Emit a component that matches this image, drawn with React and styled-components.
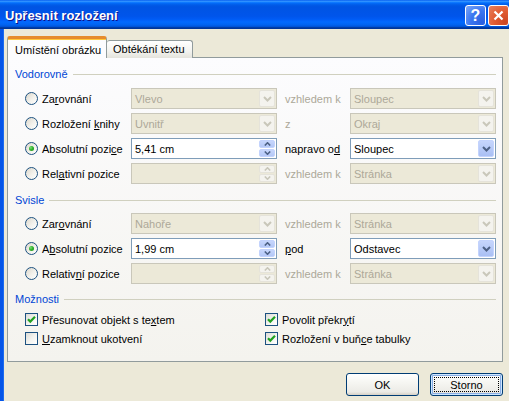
import React from 'react';
import styled, { createGlobalStyle, css } from 'styled-components';

const Global = createGlobalStyle`
  html, body { margin: 0; padding: 0; background: #ECE9D8; overflow: hidden; }
  #root { width: 509px; height: 401px; overflow: hidden; }
`;

const Window = styled.div`
  width: 514px;
  height: 401px;
  display: flex;
  flex-direction: column;
  font-family: "Liberation Sans", Arial, sans-serif;
  font-size: 11px;
  color: #000;
`;

const TitleBar = styled.div`
  flex: none;
  height: 29px;
  display: flex;
  align-items: center;
  padding: 0 5px 0 5px;
  background: linear-gradient(to bottom,
    #0058EE 0%, #3593FF 4%, #288EFF 6%, #127DFF 8%, #036FFC 10%,
    #0262EE 14%, #0057E5 20%, #0054E3 24%, #0055EB 56%, #005BF5 66%,
    #026AFE 76%, #0062EF 86%, #0052D6 92%, #0040AB 94%, #003092 100%);
`;

const Title = styled.div`
  flex: 1;
  color: #fff;
  font-weight: bold;
  font-size: 13px;
  text-shadow: 1px 1px #0F1089;
  padding-top: 1px;
`;

const TitleButtons = styled.div`
  display: flex;
  gap: 2px;
  align-self: flex-start;
  margin-top: 5px;
`;

const CaptionButton = styled.div`
  width: 21px;
  height: 21px;
  box-sizing: border-box;
  border: 1px solid #fff;
  border-radius: 3px;
  display: flex;
  align-items: center;
  justify-content: center;
  color: #fff;
  font-weight: bold;
  font-size: 16px;
  ${p => p.$close ? css`
    background: radial-gradient(circle at 85% 85%, #CC4622 0%, #E0592F 45%, #E8825F 100%);
  ` : css`
    background: radial-gradient(circle at 85% 85%, #2A5FE0 0%, #3A76F0 50%, #7FA8F8 100%);
  `}
`;

const Body = styled.div`
  flex: 1;
  display: flex;
  flex-direction: column;
  background: #ECE9D8;
  border-left: 3px solid #0555E8;
  box-shadow: inset 1px 0 0 #1C6BF0;
  padding: 7px 0 0 4px;
`;

const Tabs = styled.div`
  display: flex;
  align-items: flex-end;
  height: 22px;
  margin-bottom: -1px;
  position: relative;
  z-index: 1;
`;

const Tab = styled.div`
  box-sizing: border-box;
  border: 1px solid #919B9C;
  border-bottom: none;
  border-radius: 3px 3px 0 0;
  display: flex;
  align-items: center;
  ${p => p.$active ? css`
    width: 100px;
    height: 22px;
    padding: 2px 0 0 7px;
    background: #FCFCFE;
    border-top: 3px solid #E68B2C;
    box-shadow: inset 0 1px 0 #FFC73C;
  ` : css`
    width: 86px;
    height: 18px;
    padding: 0 0 1px 6px;
    background: linear-gradient(to bottom, #FFFFFF, #F3F3EF 60%, #E4E3DC);
    border-left: none;
  `}
`;

const Panel = styled.div`
  box-sizing: border-box;
  width: 496px;
  height: 305px;
  border: 1px solid #919B9C;
  background: linear-gradient(to bottom, #FCFCFE, #F4F3EE);
  padding: 9px 6px 0 7px;
  display: flex;
  flex-direction: column;
`;

const Header = styled.div`
  display: flex;
  align-items: center;
  height: 14px;
  color: #0046D5;
  margin-top: ${p => p.$mt || 0}px;
  &::after {
    content: '';
    flex: 1;
    height: 1px;
    background: #D0D0BF;
    margin-left: 5px;
  }
`;

const RowGrid = styled.div`
  display: grid;
  grid-template-columns: 106px 146px 73px 146px;
  grid-auto-rows: 21px;
  row-gap: 4px;
  padding-left: 10px;
  margin-top: ${p => p.$mt}px;
`;

const OptionLabel = styled.label`
  display: flex;
  align-items: center;
  gap: 4px;
  white-space: nowrap;
`;

const RadioCircle = styled.span`
  box-sizing: border-box;
  width: 13px;
  height: 13px;
  border-radius: 50%;
  border: 1px solid #1C5180;
  background: linear-gradient(135deg, #DCD7CB 0%, #F2F1EC 55%, #FFFFFF 100%);
  display: flex;
  align-items: center;
  justify-content: center;
  flex: none;
  ${p => p.$checked && css`
    &::after {
      content: '';
      width: 5px;
      height: 5px;
      border-radius: 50%;
      background: radial-gradient(circle at 35% 35%, #7FE07A 0%, #2DB22A 45%, #1A8A1A 100%);
    }
  `}
`;

const CheckBox = styled.span`
  box-sizing: border-box;
  width: 13px;
  height: 13px;
  border: 1px solid #1C5180;
  background: linear-gradient(135deg, #DCDCD7 0%, #F4F4F0 55%, #FFFFFF 100%);
  display: flex;
  align-items: center;
  justify-content: center;
  flex: none;
`;

const U = styled.span`
  text-decoration: underline;
`;

const SideLabel = styled.div`
  display: flex;
  align-items: center;
  padding-left: 8px;
  color: ${p => p.$disabled ? '#ACA899' : '#000'};
`;

const Field = styled.div`
  box-sizing: border-box;
  height: 21px;
  display: flex;
  align-items: center;
  padding: 1px;
  border: 1px solid ${p => p.$disabled ? '#C9C7BA' : '#7F9DB9'};
  background: ${p => p.$disabled ? '#ECE9D8' : '#FFFFFF'};
  color: ${p => p.$disabled ? '#ACA899' : '#000'};
`;

const FieldText = styled.span`
  flex: 1;
  padding-left: 2px;
  white-space: nowrap;
`;

const DropButton = styled.span`
  box-sizing: border-box;
  width: 16px;
  height: 17px;
  border-radius: 2px;
  display: flex;
  align-items: center;
  justify-content: center;
  ${p => p.$disabled ? css`
    background: #F4F3EE;
    border: 1px solid #E5E3DA;
  ` : css`
    background: linear-gradient(to bottom, #C6D6FC 0%, #B8CBF8 50%, #A9BFF4 100%);
    border: 1px solid #C3D3FD;
  `}
`;

const SpinButtons = styled.span`
  width: 16px;
  height: 17px;
  display: flex;
  flex-direction: column;
  gap: 1px;
`;

const SpinHalf = styled.span`
  box-sizing: border-box;
  flex: 1;
  border-radius: 2px;
  display: flex;
  align-items: center;
  justify-content: center;
  ${p => p.$disabled ? css`
    background: #F4F3EE;
    border: 1px solid #E5E3DA;
  ` : css`
    background: linear-gradient(to bottom, #C6D6FC 0%, #B4C8F7 100%);
    border: 1px solid #C3D3FD;
  `}
`;

const CheckGrid = styled.div`
  display: grid;
  grid-template-columns: 240px 1fr;
  grid-auto-rows: 19px;
  padding-left: 10px;
  margin-top: 4px;
`;

const Footer = styled.div`
  width: 496px;
  display: flex;
  justify-content: flex-end;
  gap: 11px;
  margin-top: 11px;
`;

const Button = styled.div`
  box-sizing: border-box;
  width: 73px;
  height: 23px;
  border: 1px solid #003C74;
  border-radius: 3px;
  background: linear-gradient(to bottom, #FFFFFF 0%, #F6F6F2 40%, #ECEBE6 85%, #D6D0C5 100%);
  display: flex;
  align-items: center;
  justify-content: center;
  position: relative;
  ${p => p.$default && css`
    box-shadow: inset 0 0 0 1px #CEE7FF, inset 0 0 0 2px #89ADE4;
    &::after {
      content: '';
      position: absolute;
      inset: 3px;
      border: 1px dotted #000;
    }
  `}
`;

const Chevron = ({ color, disabled }) => (
  <svg width="9" height="6" viewBox="0 0 9 6">
    <polyline points="1,1 4.5,4.5 8,1" fill="none" stroke={disabled ? '#C9C7BA' : (color || '#4D6185')} strokeWidth="2" />
  </svg>
);

const SmallArrow = ({ up, disabled }) => (
  <svg width="7" height="4" viewBox="0 0 7 4">
    <polyline points={up ? '0.8,3.5 3.5,0.8 6.2,3.5' : '0.8,0.5 3.5,3.2 6.2,0.5'} fill="none" stroke={disabled ? '#C9C7BA' : '#4D6185'} strokeWidth="1.6" />
  </svg>
);

const Combo = ({ value, disabled }) => (
  <Field $disabled={disabled}>
    <FieldText>{value}</FieldText>
    <DropButton $disabled={disabled}><Chevron disabled={disabled} /></DropButton>
  </Field>
);

const Spin = ({ value, disabled }) => (
  <Field $disabled={disabled}>
    <FieldText>{value}</FieldText>
    <SpinButtons>
      <SpinHalf $disabled={disabled}><SmallArrow up disabled={disabled} /></SpinHalf>
      <SpinHalf $disabled={disabled}><SmallArrow disabled={disabled} /></SpinHalf>
    </SpinButtons>
  </Field>
);

const Radio = ({ checked, children }) => (
  <OptionLabel>
    <RadioCircle $checked={checked} />
    <span>{children}</span>
  </OptionLabel>
);

const Check = ({ checked, children }) => (
  <OptionLabel>
    <CheckBox>
      {checked && (
        <svg width="9" height="9" viewBox="0 0 9 9">
          <polyline points="1,4.2 3.3,6.6 8,1.8" fill="none" stroke="#21A121" strokeWidth="2.2" />
        </svg>
      )}
    </CheckBox>
    <span>{children}</span>
  </OptionLabel>
);

export default function App() {
  return (
    <>
      <Global />
      <Window>
        <TitleBar>
          <Title>Upřesnit rozložení</Title>
          <TitleButtons>
            <CaptionButton>?</CaptionButton>
            <CaptionButton $close>
              <svg width="11" height="11" viewBox="0 0 11 11">
                <path d="M1.5 1.5 L9.5 9.5 M9.5 1.5 L1.5 9.5" stroke="#fff" strokeWidth="2.2" />
              </svg>
            </CaptionButton>
          </TitleButtons>
        </TitleBar>
        <Body>
          <Tabs>
            <Tab $active>Umístění obrázku</Tab>
            <Tab>Obtékání textu</Tab>
          </Tabs>
          <Panel>
            <Header>Vodorovně</Header>
            <RowGrid $mt={7}>
              <Radio>Za<U>r</U>ovnání</Radio>
              <Combo value="Vlevo" disabled />
              <SideLabel $disabled>vzhledem k</SideLabel>
              <Combo value="Sloupec" disabled />

              <Radio>Rozložení <U>k</U>nihy</Radio>
              <Combo value="Uvnitř" disabled />
              <SideLabel $disabled>z</SideLabel>
              <Combo value="Okraj" disabled />

              <Radio checked>Absolutní pozi<U>c</U>e</Radio>
              <Spin value="5,41 cm" />
              <SideLabel>napravo o<U>d</U></SideLabel>
              <Combo value="Sloupec" />

              <Radio>Rel<U>a</U>tivní pozice</Radio>
              <Spin value="" disabled />
              <SideLabel $disabled>vzhledem k</SideLabel>
              <Combo value="Stránka" disabled />
            </RowGrid>

            <Header $mt={9}>Svisle</Header>
            <RowGrid $mt={6}>
              <Radio>Zar<U>o</U>vnání</Radio>
              <Combo value="Nahoře" disabled />
              <SideLabel $disabled>vzhledem k</SideLabel>
              <Combo value="Stránka" disabled />

              <Radio checked>A<U>b</U>solutní pozice</Radio>
              <Spin value="1,99 cm" />
              <SideLabel><U>p</U>od</SideLabel>
              <Combo value="Odstavec" />

              <Radio>Relativ<U>n</U>í pozice</Radio>
              <Spin value="" disabled />
              <SideLabel $disabled>vzhledem k</SideLabel>
              <Combo value="Stránka" disabled />
            </RowGrid>

            <Header $mt={8}>Možnosti</Header>
            <CheckGrid>
              <Check checked>Přesunovat objekt s te<U>x</U>tem</Check>
              <Check checked>Povolit překr<U>y</U>tí</Check>
              <Check><U>U</U>zamknout ukotvení</Check>
              <Check checked>Rozložení v buň<U>c</U>e tabulky</Check>
            </CheckGrid>
          </Panel>
          <Footer>
            <Button>OK</Button>
            <Button $default>Storno</Button>
          </Footer>
        </Body>
      </Window>
    </>
  );
}
